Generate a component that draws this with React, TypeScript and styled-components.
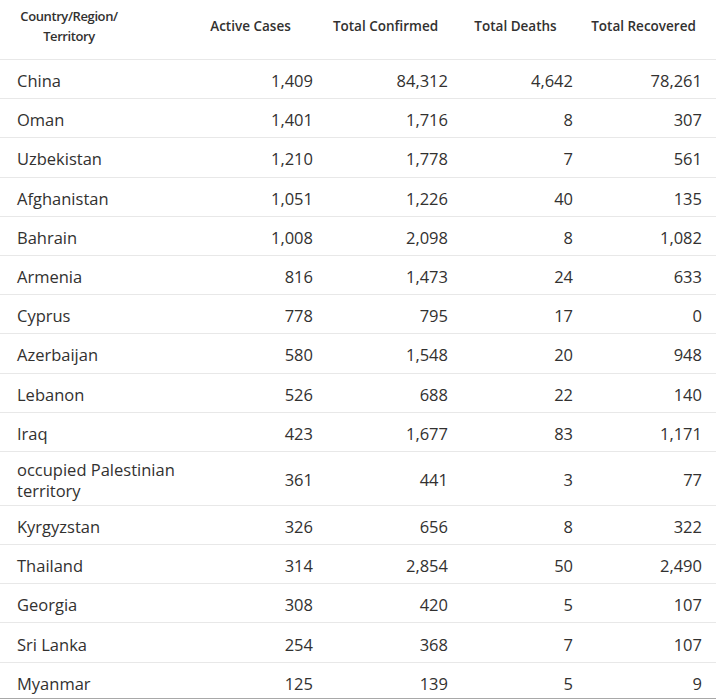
import React from 'react';
import styled, { createGlobalStyle } from 'styled-components';

const GlobalStyle = createGlobalStyle`
  html, body {
    margin: 0;
    padding: 0;
    background: #ffffff;
  }
  body {
    font-family: 'Open Sans', 'Noto Sans', 'Liberation Sans', sans-serif;
    color: #323130;
    overflow: hidden;
  }
`;

const Frame = styled.div`
  width: 716px;
  height: 698px;
  overflow: hidden;
  border-bottom: 1px solid #a8a8a8;
`;

const Table = styled.table`
  width: 716px;
  table-layout: fixed;
  border-collapse: collapse;
`;

const HeadCell = styled.th<{ $first?: boolean }>`
  height: 59px;
  box-sizing: border-box;
  padding: 6px ${(p) => (p.$first ? '0' : '14px')} 13px ${(p) => (p.$first ? '9px' : '0')};
  font-size: 13.5px;
  font-weight: 600;
  line-height: 20px;
  color: #323130;
  text-align: ${(p) => (p.$first ? 'left' : 'center')};
  vertical-align: middle;
  border-bottom: 1px solid #e8e8e8;
`;

const HeadLabel = styled.span`
  display: inline-block;
  width: 120px;
  font-size: 13px;
  letter-spacing: -0.4px;
  text-align: center;
`;

const Row = styled.tr`
  border-bottom: 1px solid #e8e8e8;
`;

const Cell = styled.td<{ $name?: boolean }>`
  height: 39.2px;
  box-sizing: border-box;
  padding: ${(p) => (p.$name ? '7px 0 4px 17px' : '7px 12px 4px 0')};
  font-size: 16.5px;
  line-height: 21px;
  color: #323130;
  text-align: ${(p) => (p.$name ? 'left' : 'right')};
  vertical-align: middle;

  &:last-child {
    padding-right: 14px;
  }
`;

type Entry = [string, string, string, string, string];

const rows: Entry[] = [
  ['China', '1,409', '84,312', '4,642', '78,261'],
  ['Oman', '1,401', '1,716', '8', '307'],
  ['Uzbekistan', '1,210', '1,778', '7', '561'],
  ['Afghanistan', '1,051', '1,226', '40', '135'],
  ['Bahrain', '1,008', '2,098', '8', '1,082'],
  ['Armenia', '816', '1,473', '24', '633'],
  ['Cyprus', '778', '795', '17', '0'],
  ['Azerbaijan', '580', '1,548', '20', '948'],
  ['Lebanon', '526', '688', '22', '140'],
  ['Iraq', '423', '1,677', '83', '1,171'],
  ['occupied Palestinian territory', '361', '441', '3', '77'],
  ['Kyrgyzstan', '326', '656', '8', '322'],
  ['Thailand', '314', '2,854', '50', '2,490'],
  ['Georgia', '308', '420', '5', '107'],
  ['Sri Lanka', '254', '368', '7', '107'],
  ['Myanmar', '125', '139', '5', '9'],
];

const App: React.FC = () => {
  return (
    <>
      <GlobalStyle />
      <Frame>
        <Table>
          <colgroup>
            <col style={{ width: 190 }} />
            <col style={{ width: 135 }} />
            <col style={{ width: 135 }} />
            <col style={{ width: 125 }} />
            <col style={{ width: 131 }} />
          </colgroup>
          <thead>
            <tr>
              <HeadCell $first>
                <HeadLabel>
                  Country/Region/<wbr />Territory
                </HeadLabel>
              </HeadCell>
              <HeadCell>Active Cases</HeadCell>
              <HeadCell>Total Confirmed</HeadCell>
              <HeadCell>Total Deaths</HeadCell>
              <HeadCell>Total Recovered</HeadCell>
            </tr>
          </thead>
          <tbody>
            {rows.map(([name, active, confirmed, deaths, recovered]) => (
              <Row key={name}>
                <Cell $name>{name}</Cell>
                <Cell>{active}</Cell>
                <Cell>{confirmed}</Cell>
                <Cell>{deaths}</Cell>
                <Cell>{recovered}</Cell>
              </Row>
            ))}
          </tbody>
        </Table>
      </Frame>
    </>
  );
};

export default App;
